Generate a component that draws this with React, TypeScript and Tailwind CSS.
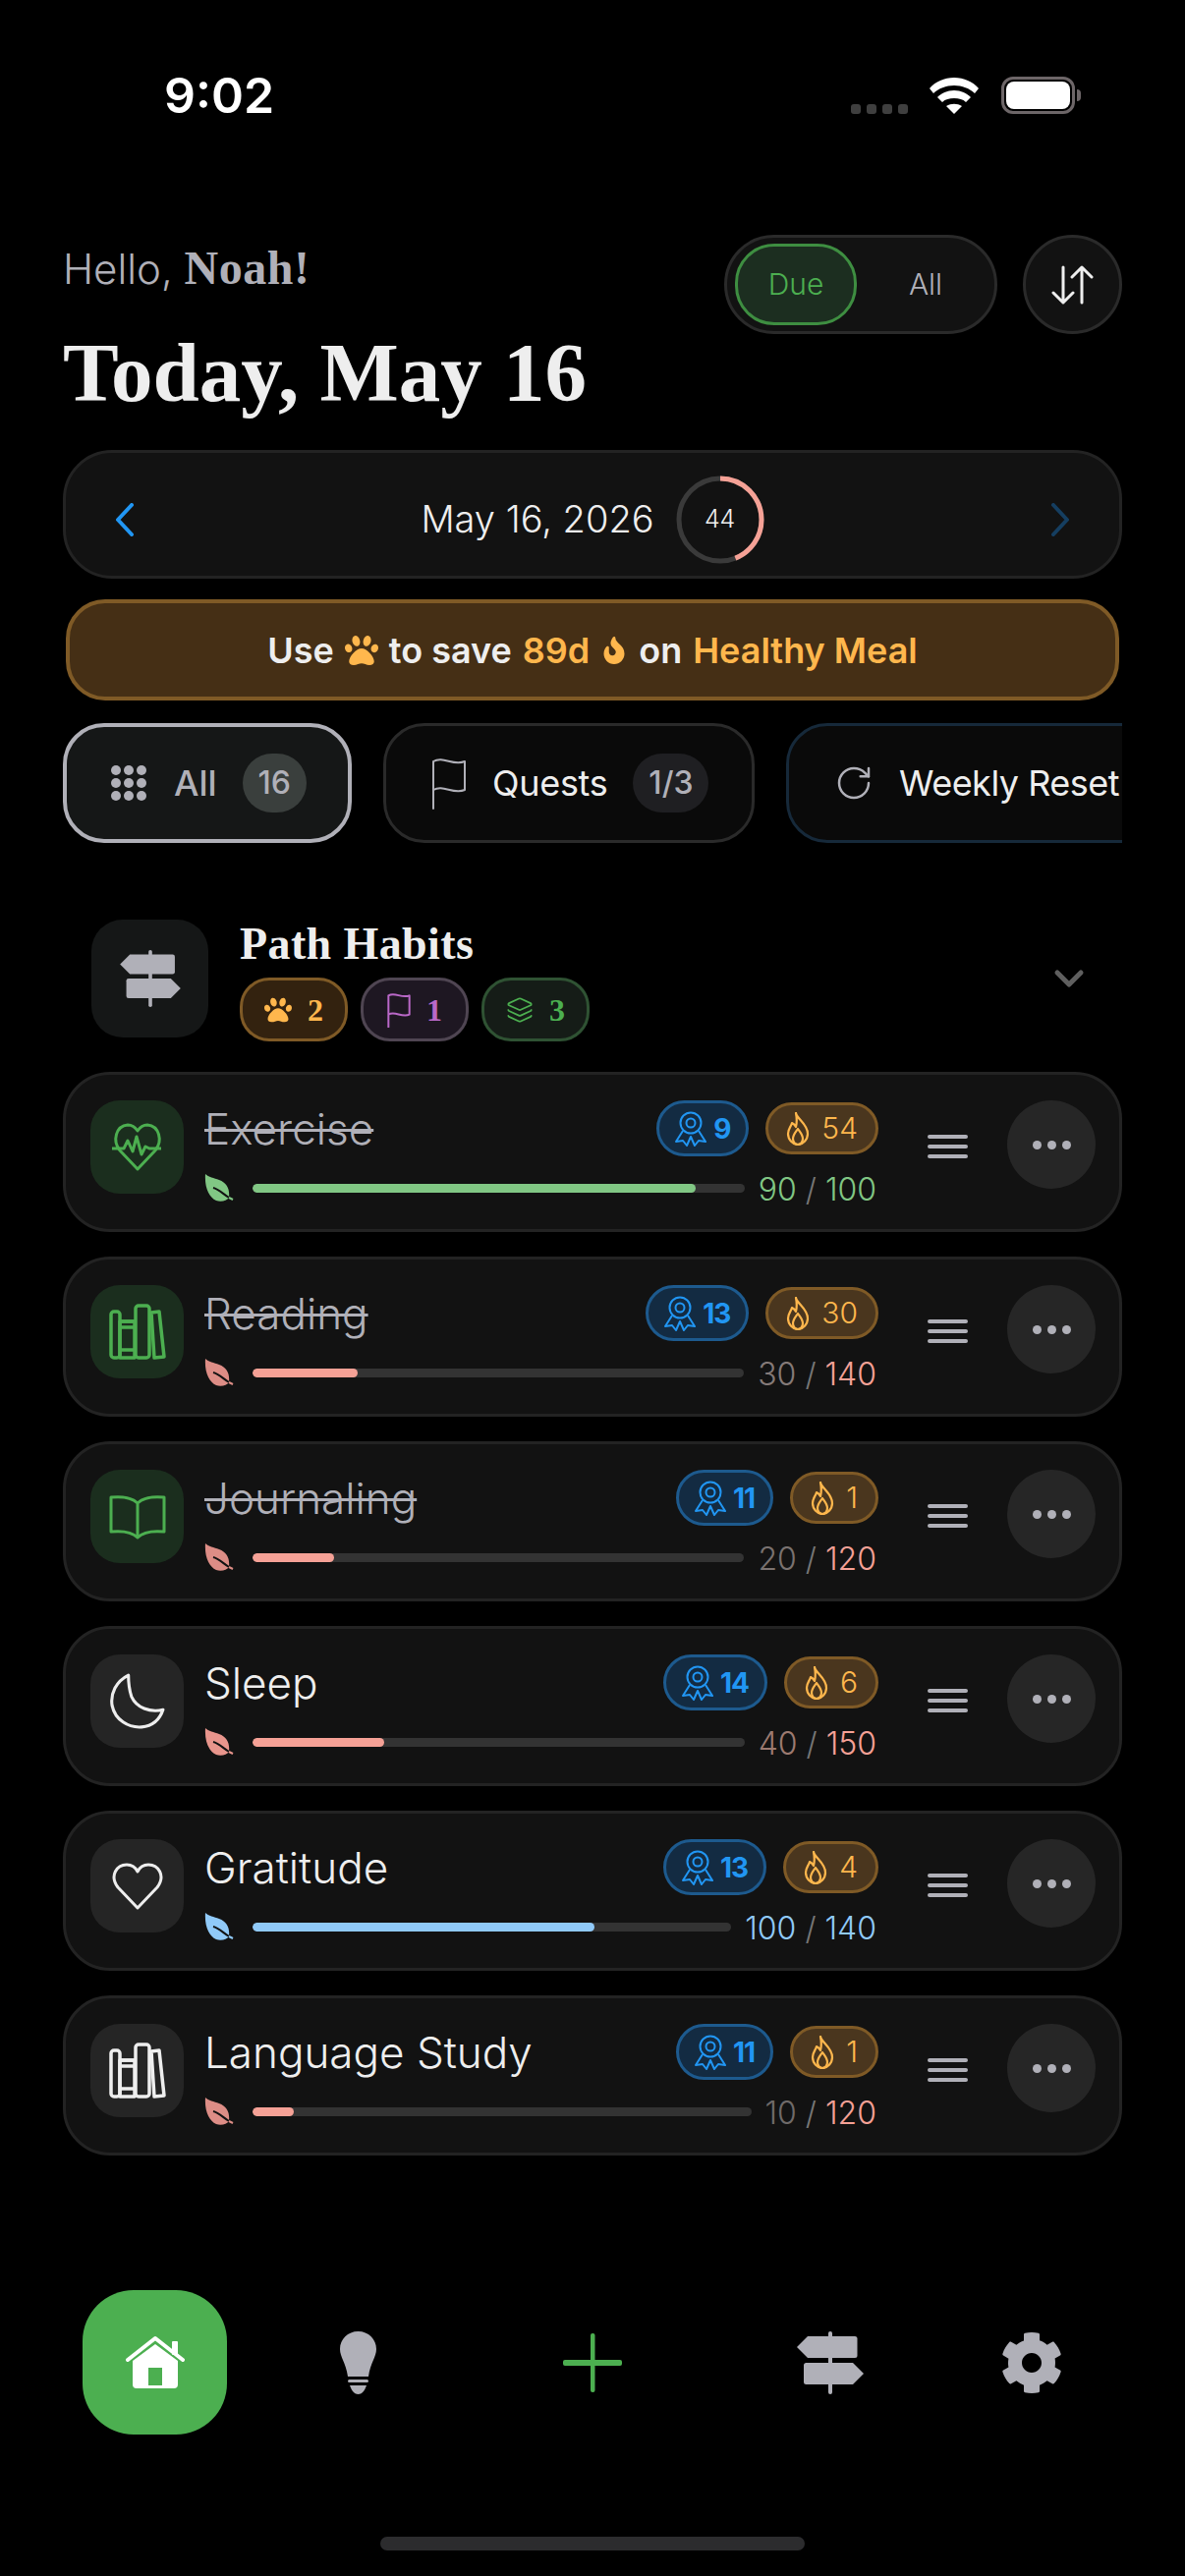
import type { ReactNode } from 'react';
import { ChevronDown, RotateCw, Layers } from 'lucide-react';
import { FaPaw, FaFire, FaCog } from 'react-icons/fa';

const sans = "font-['Inter',sans-serif]";
const serif = "font-['Liberation_Serif',serif]";

function Leaf({ color }: { color: string }) {
  return (
    <svg width="30" height="28" viewBox="0 0 30 28" className="shrink-0">
      <path d="M1 0C4 3 10 4 15 6c8 3 11 9 10 18-2 3-8 5-13 3C5 24 0 14 1 0z" fill={color} />
      <path d="M9 14c5 1 11 7 16 10" fill="none" stroke="#121212" strokeWidth="2" />
      <path d="M25 24l4 2" fill="none" stroke={color} strokeWidth="2" />
    </svg>
  );
}

function Heartbeat({ color }: { color: string }) {
  return (
    <svg width="54" height="50" viewBox="0 0 54 50" fill="none" stroke={color} strokeWidth="3" strokeLinejoin="round">
      <path d="M27 47 9 28C1 18 5 3 17 2c5 0 8 3 10 6 2-3 5-6 10-6 12 1 16 16 8 26L27 47z" />
      <path d="M1 26h12l4-8 5 11 4-15 5 18 4-8 4 2h12" />
    </svg>
  );
}

function Books({ color }: { color: string }) {
  return (
    <svg width="58" height="58" viewBox="0 0 58 58" fill="none" stroke={color} strokeWidth="3.500" strokeLinejoin="round">
      <rect x="2" y="8" width="9" height="47" rx="3" />
      <path d="M11 18h15M11 24h15M11 47h15" />
      <rect x="11" y="18" width="15" height="37" />
      <rect x="27" y="2" width="14" height="53" rx="3" />
      <path d="M43 9l8-1 5 46-10 1z" />
    </svg>
  );
}

function BookOpen({ color }: { color: string }) {
  return (
    <svg width="58" height="46" viewBox="0 0 58 46" fill="none" stroke={color} strokeWidth="3" strokeLinejoin="round">
      <path d="M29 9C23 3 12 2 2 3v35c10-1 21 0 27 6 6-6 17-7 27-6V3C46 2 35 3 29 9zM29 9v35" />
    </svg>
  );
}

function Moon({ color }: { color: string }) {
  return (
    <svg width="56" height="58" viewBox="0 0 54 56" fill="none" stroke={color} strokeWidth="3" strokeLinejoin="round">
      <path d="M18 2C6 8 0 20 2 32c3 14 16 22 29 21 11-1 18-8 21-17-13 3-26-2-31-13-2-6-3-14-3-21z" />
    </svg>
  );
}

function HeartLine({ color }: { color: string }) {
  return (
    <svg width="52" height="48" viewBox="0 0 52 48" fill="none" stroke={color} strokeWidth="3" strokeLinejoin="round">
      <path d="M26 46 6 25C-3 13 5 2 15 2c5 0 9 3 11 7 2-4 6-7 11-7 10 0 18 11 9 23L26 46z" />
    </svg>
  );
}

function Award() {
  return (
    <svg width="32" height="36" viewBox="0 0 32 36" fill="none" stroke="#2196f3" strokeWidth="2">
      <circle cx="16" cy="12" r="10.5" />
      <circle cx="16" cy="12" r="4.5" />
      <path d="M8 20 1 31l7-1 4 5 4-9 4 9 4-5 7 1-7-11" strokeLinejoin="round" />
    </svg>
  );
}

function Flame() {
  return (
    <svg width="24" height="34" viewBox="0 0 24 34" fill="none" stroke="#ffb74d" strokeWidth="2.200" strokeLinejoin="round">
      <path d="M10 1c1 6 12 11 12 21 0 6-5 11-10 11S2 28 2 22c0-5 3-7 4-11 2 1 3 2 4 4 1-4 1-9 0-14z" />
      <path d="M12 17c2 3 5 6 5 10 0 3-2 6-5 6s-5-3-5-6c0-4 3-7 5-10z" />
    </svg>
  );
}

function WavyFlag({ size, color, stroke }: { size: number; color: string; stroke: number }) {
  return (
    <svg width={size} height={size * 1.5} viewBox="0 0 36 54" fill="none" stroke={color} strokeWidth={stroke} strokeLinejoin="round" strokeLinecap="round">
      <path d="M2 53V5c10-6 20 5 32 0v29c-12 5-22-6-32 0" />
    </svg>
  );
}

function SignPost({ width, height }: { width: number; height: number }) {
  return (
    <svg width={width} height={height} viewBox="0 0 68 64" fill="#b0b0b8">
      <rect x="32" y="0" width="4" height="64" rx="2" />
      <path d="M11 5h48q2.500 0 2.500 2.500v17q0 2.500-2.500 2.500H11L0 16z" />
      <path d="M9.500 32H57l11 11-11 11H9.500Q7 54 7 51.500v-17Q7 32 9.500 32z" />
    </svg>
  );
}

function HomeIcon() {
  return (
    <svg width="60" height="55" viewBox="0 0 60 55">
      <path d="M2 25 30 3l28 22" fill="none" stroke="white" strokeWidth="4" strokeLinecap="round" strokeLinejoin="round" />
      <rect x="47" y="6" width="6" height="14" rx="1" fill="white" />
      <path d="M7 26 30 9l23 17v24q0 4-4 4H11q-4 0-4-4z" fill="white" />
      <rect x="23" y="33" width="14" height="18" fill="#4caf50" />
    </svg>
  );
}

function BulbIcon() {
  return (
    <svg width="37" height="64" viewBox="0 0 37 64" fill="#b0b0b8">
      <path d="M18.500 0C29 0 37 8 37 18c0 8-6 14-8 28H8C6 32 0 26 0 18 0 8 8 0 18.500 0z" />
      <rect x="8" y="49" width="21" height="3" rx="1.500" />
      <path d="M10 55h17c-2 6-5 9-8.500 9S12 61 10 55z" />
    </svg>
  );
}

type Habit = {
  name: string;
  done: boolean;
  icon: 'pulse' | 'books' | 'book' | 'moon' | 'heart';
  award: number;
  fire: number;
  value: number;
  total: number;
  leaf: string;
  fill: string;
  valueColor: string;
  totalColor: string;
};

const habits: Habit[] = [
  { name: 'Exercise', done: true, icon: 'pulse', award: 9, fire: 54, value: 90, total: 100, leaf: '#81c784', fill: '#81c784', valueColor: '#81c784', totalColor: '#81c784' },
  { name: 'Reading', done: true, icon: 'books', award: 13, fire: 30, value: 30, total: 140, leaf: '#dd8d86', fill: '#f5a196', valueColor: '#857a78', totalColor: '#f5a196' },
  { name: 'Journaling', done: true, icon: 'book', award: 11, fire: 1, value: 20, total: 120, leaf: '#dd8d86', fill: '#f5a196', valueColor: '#7a7270', totalColor: '#f5a196' },
  { name: 'Sleep', done: false, icon: 'moon', award: 14, fire: 6, value: 40, total: 150, leaf: '#e8958c', fill: '#f5a196', valueColor: '#9c7a70', totalColor: '#f5a196' },
  { name: 'Gratitude', done: false, icon: 'heart', award: 13, fire: 4, value: 100, total: 140, leaf: '#90caf9', fill: '#90caf9', valueColor: '#90caf9', totalColor: '#90caf9' },
  { name: 'Language Study', done: false, icon: 'books', award: 11, fire: 1, value: 10, total: 120, leaf: '#dd8d86', fill: '#f5a196', valueColor: '#6f6a69', totalColor: '#f5a196' },
];

function HabitIcon({ icon, color }: { icon: Habit['icon']; color: string }) {
  if (icon === 'pulse') return <Heartbeat color={color} />;
  if (icon === 'books') return <Books color={color} />;
  if (icon === 'book') return <BookOpen color={color} />;
  if (icon === 'moon') return <Moon color={color} />;
  return <HeartLine color={color} />;
}

function HabitRow({ h }: { h: Habit }) {
  return (
    <div className="flex h-[163px] items-start rounded-[48px] border-[3px] border-[#232323] bg-[#121212] pl-[25px] pr-[25px] pt-[26px]">
      <div className={`flex h-[95px] w-[95px] shrink-0 items-center justify-center rounded-[30px] ${h.done ? 'bg-[#1b2e1e]' : 'bg-[#252525]'}`}>
        <HabitIcon icon={h.icon} color={h.done ? '#4caf50' : '#eeeeee'} />
      </div>
      <div className="ml-[21px] flex w-[686px] shrink-0 flex-col">
        <div className="flex h-[57px] items-center justify-between">
          <span className={`text-[44px] leading-none font-light ${h.done ? 'text-[#b0b0b8] line-through decoration-[3px]' : 'text-[#eeeeee]'}`}>{h.name}</span>
          <div className="flex items-center gap-[17px]">
            <div className="flex h-[57px] items-center gap-[7px] rounded-full border-[3px] border-[#1d5a8e] bg-[#132b42] px-[16px] text-[#2196f3]">
              <Award />
              <span className="text-[28px] font-bold tracking-[-1px]">{h.award}</span>
            </div>
            <div className="flex h-[53px] items-center gap-[12px] rounded-full border-[3px] border-[#7f5a26] bg-[#4a361e] px-[18px] text-[#ffb74d]">
              <Flame />
              <span className="text-[30px] font-light">{h.fire}</span>
            </div>
          </div>
        </div>
        <div className="mt-[17px] flex h-[30px] items-center">
          <Leaf color={h.leaf} />
          <div className="ml-[19px] h-[9px] flex-1 overflow-hidden rounded-full bg-[#333333]">
            <div className="h-full rounded-full" style={{ width: `${(h.value / h.total) * 100}%`, backgroundColor: h.fill }} />
          </div>
          <div className="ml-[14px] mt-[3px] pr-[2px] text-[32px] leading-none font-light">
            <span style={{ color: h.valueColor }}>{h.value}</span>
            <span className="text-[#777777]"> / </span>
            <span style={{ color: h.totalColor }}>{h.total}</span>
          </div>
        </div>
      </div>
      <div className="ml-[50px] mt-[35px] flex w-[41px] shrink-0 flex-col gap-[6px]">
        <div className="h-[4px] rounded-full bg-[#b0b0b8]" />
        <div className="h-[4px] rounded-full bg-[#b0b0b8]" />
        <div className="h-[4px] rounded-full bg-[#b0b0b8]" />
      </div>
      <div className="ml-[40px] flex h-[90px] w-[90px] shrink-0 items-center justify-center gap-[6px] rounded-full bg-[#262626]">
        <div className="h-[9px] w-[9px] rounded-full bg-[#b0b0b8]" />
        <div className="h-[9px] w-[9px] rounded-full bg-[#b0b0b8]" />
        <div className="h-[9px] w-[9px] rounded-full bg-[#b0b0b8]" />
      </div>
    </div>
  );
}

function Chip({ className, children }: { className: string; children: ReactNode }) {
  return <div className={`flex h-[122px] shrink-0 items-center rounded-[42px] ${className}`}>{children}</div>;
}

export default function App() {
  return (
    <div className={`${sans} h-[2622px] w-[1206px] overflow-hidden bg-black text-[#eeeeee]`}>
      <div className="flex h-[239px] items-start justify-between pl-[167px] pr-[106px] pt-[68px]">
        <span className="text-[50px] leading-[58px] font-semibold text-white">9:02</span>
        <div className="flex items-center pt-[10px]">
          <div className="mt-[28px] flex gap-[6px]">
            <div className="h-[10px] w-[10px] rounded-[3px] bg-[#3f3f3f]" />
            <div className="h-[10px] w-[10px] rounded-[3px] bg-[#3f3f3f]" />
            <div className="h-[10px] w-[10px] rounded-[3px] bg-[#3f3f3f]" />
            <div className="h-[10px] w-[10px] rounded-[3px] bg-[#3f3f3f]" />
          </div>
          <svg width="50" height="37" viewBox="0 0 50 37" className="ml-[22px]" fill="white">
            <path d="M25 37 17 29c5-3 11-3 16 0z" />
            <path d="M25 13c7 0 13 3 17 7l-5 5c-3-3-7-4-12-4s-9 1-12 4l-5-5c4-4 10-7 17-7z" />
            <path d="M25 0c10 0 19 4 25 11l-4 5c-5-5-13-8-21-8S9 11 4 16l-4-5C6 4 15 0 25 0z" />
          </svg>
          <div className="ml-[23px] flex h-[38px] w-[75px] items-center rounded-[12px] border-[3px] border-[#6d6668] p-[2px]">
            <div className="h-full w-full rounded-[8px] bg-white" />
          </div>
          <div className="ml-[2px] h-[12px] w-[4px] rounded-r-full bg-[#6d6668]" />
        </div>
      </div>

      <div className="px-[64px]">
        <div className="flex items-start justify-between">
          <div className="flex flex-col">
            <div className="mt-[8px] text-[42px] leading-[52px] font-light text-[#b0b0b8]">
              Hello, <span className={`${serif} text-[48px] font-bold tracking-[0.5px]`}>Noah!</span>
            </div>
            <div className={`${serif} mt-[34px] text-[85px] leading-[90px] font-bold text-[#eeeeee]`}>Today, May 16</div>
          </div>
          <div className="flex gap-[26px]">
            <div className="flex h-[101px] w-[278px] items-center rounded-full border-[3px] border-[#2a2a2a] bg-[#121212] pl-[8px]">
              <div className="flex h-[83px] w-[124px] items-center justify-center rounded-[40px] border-[3px] border-[#3e8e41] bg-[#1c2e20] text-[30px] font-light text-[#4caf50]">Due</div>
              <div className="flex-1 text-center text-[30px] font-light text-[#b0b0b8]">All</div>
            </div>
            <div className="flex h-[101px] w-[101px] items-center justify-center rounded-full border-[3px] border-[#2a2a2a] bg-[#121212]">
              <svg width="46" height="40" viewBox="0 0 46 40" fill="none" stroke="#eeeeee" strokeWidth="3" strokeLinecap="round" strokeLinejoin="round">
                <path d="M13 2v36M3 28l10 10 10-10M32 38V2M22 12 32 2l10 10" />
              </svg>
            </div>
          </div>
        </div>

        <div className="mt-[34px] flex h-[131px] items-center justify-between rounded-[50px] border-[3px] border-[#232323] bg-[#121212] px-[50px] pt-[10px]">
          <svg width="20" height="34" viewBox="0 0 20 34" fill="none" stroke="#2196f3" strokeWidth="4" strokeLinecap="round" strokeLinejoin="round">
            <path d="M17 2 3 17l14 15" />
          </svg>
          <div className="flex items-center gap-[22px]">
            <span className="text-[38px] font-light">May 16, 2026</span>
            <div className="relative flex h-[90px] w-[90px] items-center justify-center text-[25px] font-light">
              <svg width="90" height="90" viewBox="0 0 90 90" className="absolute inset-0 -rotate-90">
                <circle cx="45" cy="45" r="42" fill="none" stroke="#3a3a3a" strokeWidth="5" />
                <circle cx="45" cy="45" r="42" fill="none" stroke="#f5a196" strokeWidth="5" strokeDasharray="116 264" />
              </svg>
              44
            </div>
          </div>
          <svg width="20" height="34" viewBox="0 0 20 34" fill="none" stroke="#153e60" strokeWidth="4" strokeLinecap="round" strokeLinejoin="round">
            <path d="m3 2 14 15L3 32" />
          </svg>
        </div>

        <div className="mx-[3px] mt-[21px] flex h-[103px] items-center justify-center gap-[11px] rounded-[40px] border-[4px] border-[#7f5a26] bg-[#452f15] text-[36px] font-semibold">
          <span>Use</span>
          <FaPaw size={34} color="#ffb74d" />
          <span>to save</span>
          <span className="text-[#ffb74d]">89d</span>
          <FaFire size={28} color="#ffb74d" />
          <span>on</span>
          <span className="text-[#ffb74d]">Healthy Meal</span>
        </div>

        <div className="mt-[23px] flex gap-[32px] overflow-hidden">
          <Chip className="w-[294px] gap-[28px] border-[4px] border-[#b0b0b8] bg-[#151717] pl-[45px]">
            <div className="grid grid-cols-3 gap-[3px]">
              {[0, 1, 2, 3, 4, 5, 6, 7, 8].map((i) => (
                <div key={i} className="h-[10px] w-[10px] rounded-full bg-[#b0b0b8]" />
              ))}
            </div>
            <span className="text-[36px] font-medium text-[#b0b0b8]">All</span>
            <div className="-ml-[2px] flex h-[60px] w-[65px] items-center justify-center rounded-full bg-[#3a3f3d] text-[32px] font-medium text-[#b0b0b8]">16</div>
          </Chip>
          <Chip className="w-[378px] gap-[26px] border-[3px] border-[#2a2a2a] bg-[#0a0a0a] pl-[46px]">
            <WavyFlag size={36} color="#b0b0b8" stroke={2} />
            <span className="text-[36px] font-normal tracking-[-0.3px]">Quests</span>
            <div className="flex h-[60px] w-[77px] items-center justify-center rounded-full bg-[#1f1f22] text-[32px] font-medium text-[#b0b0b8]">1/3</div>
          </Chip>
          <Chip className="w-[400px] gap-[26px] border-[3px] border-[#16293a] bg-[#0a0a0a] pl-[46px]">
            <RotateCw size={40} color="#b0b0b8" strokeWidth={1.5} />
            <span className="text-[36px] font-normal tracking-[-0.5px] whitespace-nowrap">Weekly Reset</span>
          </Chip>
        </div>

        <div className="mt-[78px] flex items-start pl-[29px]">
          <div className="flex h-[120px] w-[119px] items-center justify-center rounded-[32px] bg-[#151717]">
            <SignPost width={62} height={58} />
          </div>
          <div className="ml-[32px] flex flex-1 flex-col">
            <div className={`${serif} h-[59px] text-[46px] leading-[50px] font-bold tracking-[0.4px] text-[#eeeeee]`}>Path Habits</div>
            <div className="flex gap-[13px]">
              <div className="flex h-[65px] w-[110px] items-center justify-center gap-[16px] rounded-[30px] border-[3px] border-[#7f5a26] bg-[#33220f] text-[#ffb74d]">
                <FaPaw size={28} />
                <span className={`${serif} text-[32px] font-bold`}>2</span>
              </div>
              <div className="flex h-[65px] w-[110px] items-center justify-center gap-[16px] rounded-[30px] border-[3px] border-[#4f4552] bg-[#1e1722] text-[#ba68c8]">
                <WavyFlag size={24} color="#ba68c8" stroke={3} />
                <span className={`${serif} text-[32px] font-bold`}>1</span>
              </div>
              <div className="flex h-[65px] w-[110px] items-center justify-center gap-[16px] rounded-[30px] border-[3px] border-[#2f5233] bg-[#151c17] text-[#4caf50]">
                <Layers size={28} strokeWidth={1.5} />
                <span className={`${serif} text-[32px] font-bold`}>3</span>
              </div>
            </div>
          </div>
          <ChevronDown size={48} color="#5f5f5f" strokeWidth={2.5} className="mr-[30px] mt-[36px]" />
        </div>

        <div className="mt-[31px] flex flex-col gap-[25px]">
          {habits.map((h) => (
            <HabitRow key={h.name} h={h} />
          ))}
        </div>
      </div>

      <div className="mt-[137px] flex h-[147px] items-center pl-[84px]">
        <div className="flex h-[147px] w-[147px] items-center justify-center rounded-[52px] bg-[#4caf50]">
          <HomeIcon />
        </div>
        <div className="ml-[115px]"><BulbIcon /></div>
        <svg width="60" height="60" viewBox="0 0 60 60" className="ml-[190px]" fill="#4caf50">
          <rect x="0" y="27" width="60" height="6" rx="2" />
          <rect x="28" y="0" width="4.500" height="60" rx="2" />
        </svg>
        <div className="ml-[178px]"><SignPost width={68} height={64} /></div>
        <div className="ml-[139px] text-[#b0b0b8]"><FaCog size={64} /></div>
      </div>
      <div className="mx-auto mt-[104px] h-[14px] w-[432px] rounded-full bg-[#2c2c2e]" />
    </div>
  );
}
